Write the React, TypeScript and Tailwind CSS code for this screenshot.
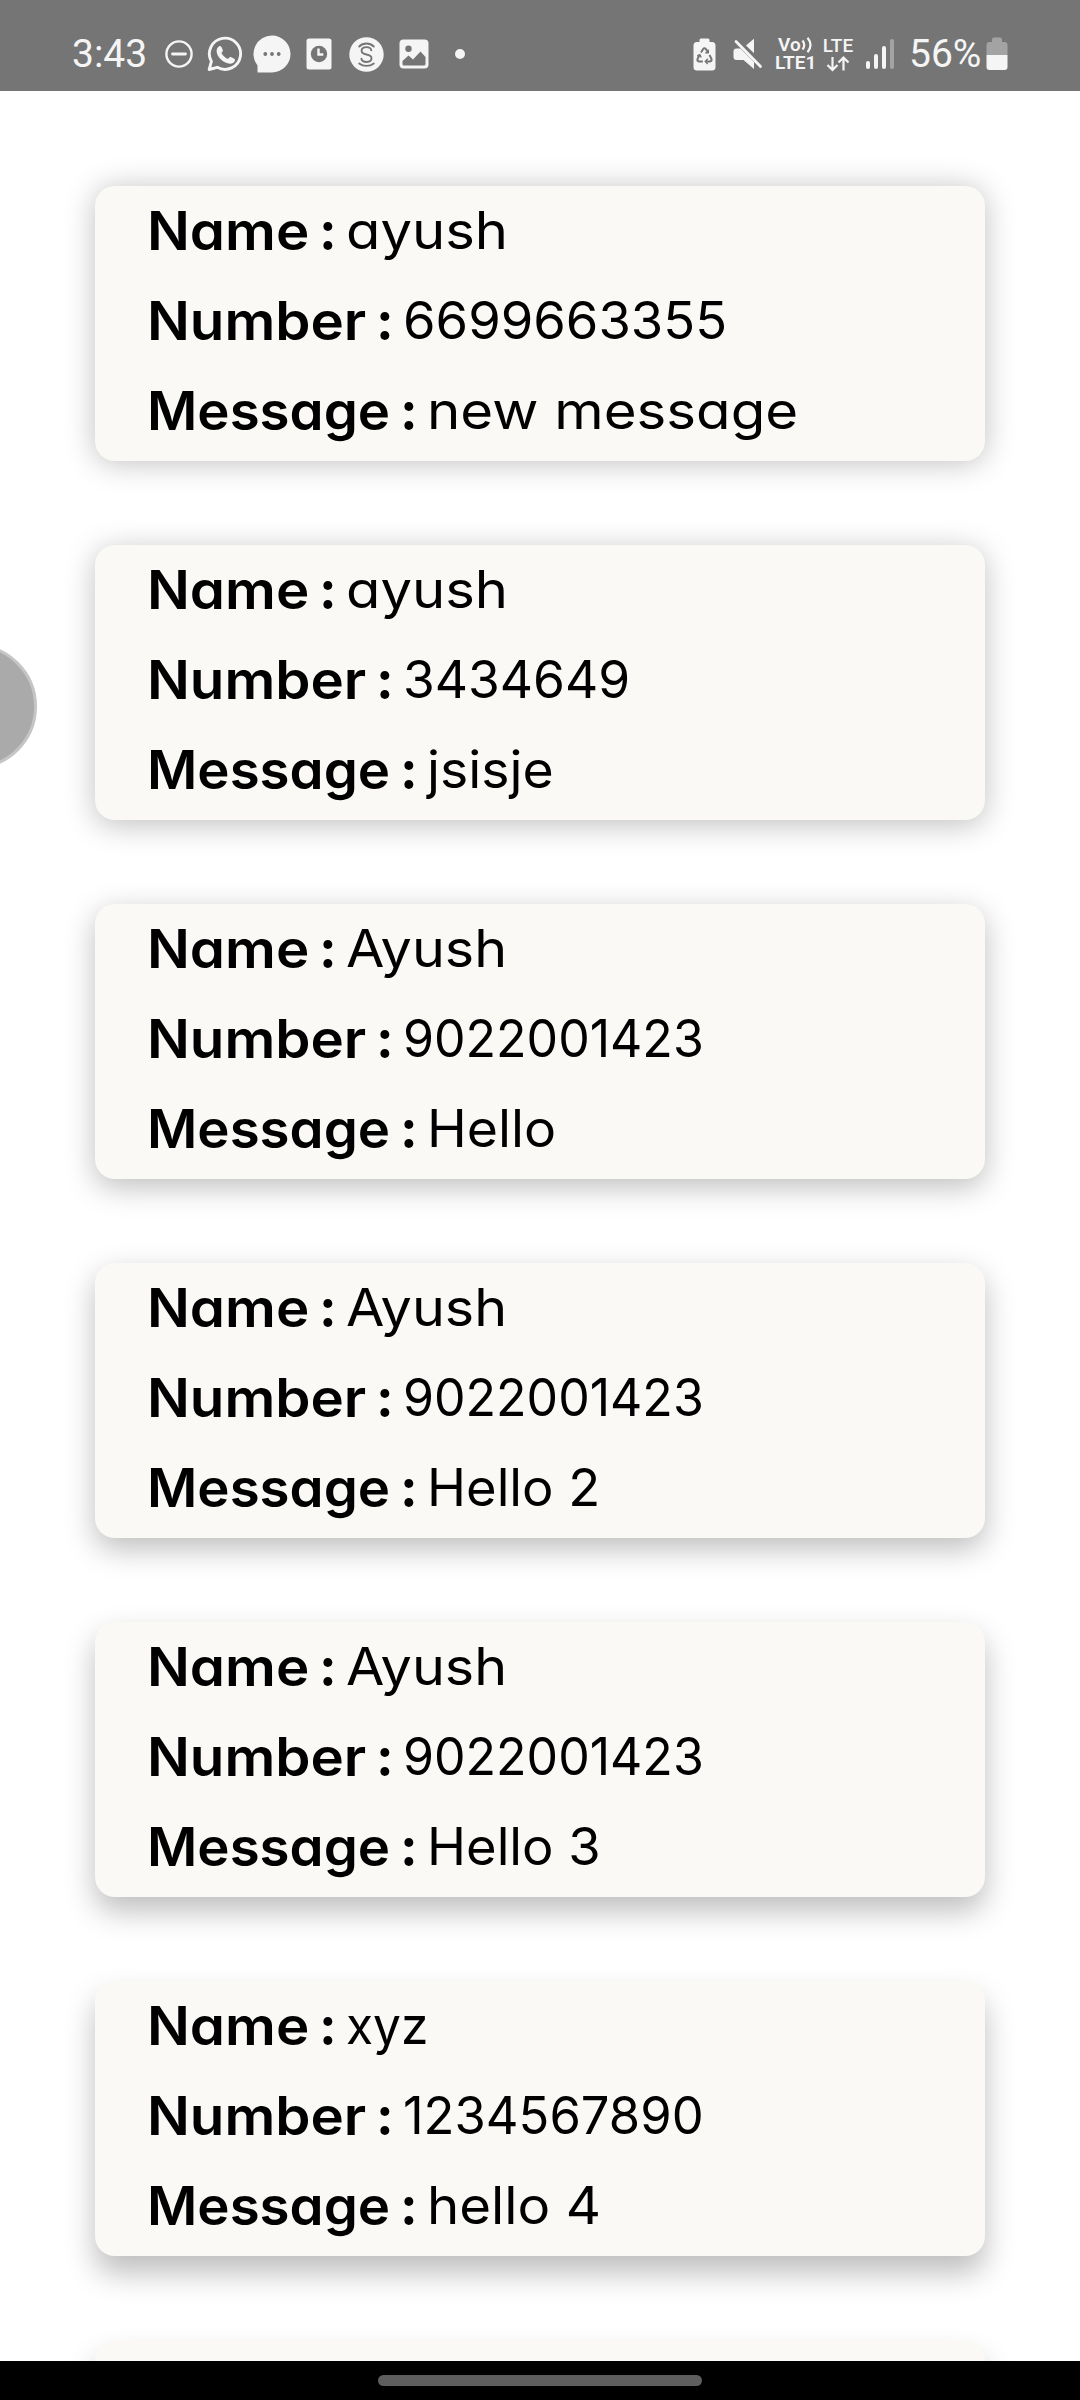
type Line = { text: string; stretch: string };
type Entry = { name: Line; number: Line; message: Line; shadow: string };

const ENTRIES: Entry[] = [
  {
    name: { text: "ayush", stretch: "scale-x-[1.08]" },
    number: { text: "6699663355", stretch: "scale-x-[1.01]" },
    message: { text: "new message", stretch: "scale-x-[1.085]" },
    shadow: "shadow-[0_2px_30px_rgba(0,0,0,0.25)]",
  },
  {
    name: { text: "ayush", stretch: "scale-x-[1.08]" },
    number: { text: "3434649", stretch: "scale-x-[0.99]" },
    message: { text: "jsisje", stretch: "scale-x-[1.03]" },
    shadow: "shadow-[0_5px_30px_rgba(0,0,0,0.25)]",
  },
  {
    name: { text: "Ayush", stretch: "scale-x-[1.07]" },
    number: { text: "9022001423", stretch: "scale-x-[0.962]" },
    message: { text: "Hello", stretch: "scale-x-[1.03]" },
    shadow: "shadow-[0_8px_30px_rgba(0,0,0,0.26)]",
  },
  {
    name: { text: "Ayush", stretch: "scale-x-[1.07]" },
    number: { text: "9022001423", stretch: "scale-x-[0.962]" },
    message: { text: "Hello 2", stretch: "scale-x-[1.01]" },
    shadow: "shadow-[0_11px_30px_rgba(0,0,0,0.26)]",
  },
  {
    name: { text: "Ayush", stretch: "scale-x-[1.07]" },
    number: { text: "9022001423", stretch: "scale-x-[0.962]" },
    message: { text: "Hello 3", stretch: "scale-x-[1.01]" },
    shadow: "shadow-[0_14px_30px_rgba(0,0,0,0.26)]",
  },
  {
    name: { text: "xyz", stretch: "scale-x-[0.955]" },
    number: { text: "1234567890", stretch: "scale-x-[0.975]" },
    message: { text: "hello 4", stretch: "scale-x-[1.05]" },
    shadow: "shadow-[0_17px_30px_rgba(0,0,0,0.26)]",
  },
];

function Row({ label, width, stretch, value }: { label: string; width: string; stretch: string; value: Line }) {
  return (
    <div className="flex h-[90px] leading-[90px] whitespace-nowrap">
      <span className={`${width} shrink-0 text-[53px] font-semibold`}>
        <span className={`inline-block origin-left ${stretch}`}>{label}</span>
      </span>
      <span className="w-[27px] shrink-0 text-[53px] font-bold">:</span>
      <span className={`inline-block origin-left ${value.stretch}`}>{value.text}</span>
    </div>
  );
}

function Card({ entry }: { entry: Entry }) {
  return (
    <section className={`h-[275px] shrink-0 rounded-[20px] bg-[#faf9f6] pl-[52px] ${entry.shadow}`}>
      <Row label="Name" width="w-[172px]" stretch="scale-x-[1.065]" value={entry.name} />
      <Row label="Number" width="w-[229px]" stretch="scale-x-[1.065]" value={entry.number} />
      <Row label="Message" width="w-[253px]" stretch="scale-x-[1.03]" value={entry.message} />
    </section>
  );
}

function NotificationIcons() {
  return (
    <>
      <svg className="ml-[17px] size-[28px]" viewBox="0 0 28 28" fill="none" stroke="currentColor">
        <circle cx="14" cy="14" r="12.6" strokeWidth="2.4" />
        <path d="M7.5 14h13" strokeWidth="2.8" strokeLinecap="round" />
      </svg>
      <svg className="ml-[14px] size-[36px]" viewBox="0 0 36 36">
        <path
          d="M2.2 33.5 4.4 25.4A15.6 15.6 0 1 1 10.3 31.3Z"
          fill="none"
          stroke="currentColor"
          strokeWidth="2.9"
          strokeLinejoin="round"
        />
        <path
          d="M12.1 10.2c.8-.4 1.8-.2 2.2.6l1.5 3.3c.4.8-.1 1.5-1.4 3 1.5 2.9 3.7 4.7 6.6 5.9 1.5-1.9 2.1-2.3 3-1.9l3.2 1.6c.8.4.9 1 .6 2-.6 1.8-2.6 3-4.6 3-7.3-.6-13.3-7-13.6-12.5 0-2 .9-4.1 2.5-5z"
          fill="currentColor"
        />
      </svg>
      <svg className="ml-[10px] h-[38px] w-[38px]" viewBox="0 0 38 38">
        <path d="M19 .5a18.5 18.5 0 1 1 0 37H4.5v-7A18.5 18.5 0 0 1 19 .5Z" fill="currentColor" />
        <g fill="#757575">
          <circle cx="12.3" cy="19" r="1.9" />
          <circle cx="19" cy="19" r="1.9" />
          <circle cx="25.7" cy="19" r="1.9" />
        </g>
      </svg>
      <svg className="ml-[15px] h-[32px] w-[26px]" viewBox="0 0 26 32">
        <rect x=".5" y=".5" width="25" height="31" rx="2.5" fill="currentColor" />
        <circle cx="13" cy="16" r="8.2" fill="#757575" />
        <path d="M12.5 10.5v6h4.8" fill="none" stroke="currentColor" strokeWidth="2.4" />
      </svg>
      <svg className="ml-[17px] size-[35px]" viewBox="0 0 35 35">
        <circle cx="17.5" cy="17.5" r="17.2" fill="currentColor" />
        <g fill="none" stroke="#757575" strokeWidth="1.9" strokeLinecap="round">
          <path d="M22.3 13.3c-.4-2-2.2-3.2-4.8-3.2-3 0-4.9 1.500-4.900 3.700 0 2.300 1.800 3.200 4.900 3.700s5 1.500 5 3.800-2 3.700-5 3.700-4.900-1.300-5.100-3.300" />
          <path d="M10.2 9.500c4-4 10.600-4 14.600 0M10.200 26.500c4 3.200 10.600 3.200 14.600 0" />
        </g>
      </svg>
      <svg className="ml-[15px] size-[30px]" viewBox="0 0 30 30">
        <rect x=".5" y=".5" width="29" height="29" rx="4" fill="currentColor" />
        <circle cx="9.5" cy="9.8" r="3.2" fill="#757575" />
        <path d="M3.5 22 9.5 16.500 14 20.500 21.500 12.500 26.500 18v7a1.500 1.500 0 0 1-1.500 1.500H5A1.500 1.500 0 0 1 3.500 25Z" fill="#757575" />
      </svg>
      <span className="ml-[26px] size-[10px] rounded-full bg-current" />
    </>
  );
}

function SystemIcons() {
  return (
    <>
      <svg className="h-[33px] w-[23px]" viewBox="0 0 23 33">
        <path d="M8 .5h7A1.5 1.5 0 0 1 16.5 2v2H19a3.5 3.5 0 0 1 3.5 3.5V29a3.5 3.5 0 0 1-3.5 3.5H4A3.5 3.5 0 0 1 .5 29V7.5A3.5 3.5 0 0 1 4 4h2.5V2A1.5 1.5 0 0 1 8 .5Z" fill="currentColor" />
        <g fill="none" stroke="#757575" strokeWidth="2">
          <path d="M8 14.5 10.3 10.8q1.2-1.3 2.4 0L14.8 14.3" />
          <path d="M16.5 17l2 4q.5 2-1.500 2.500H13M9.800 23.500H6q-2-.5-1.500-2.500L6.500 17" />
          <path d="M12.3 14.8h3v-3.300M14.800 20.800l-2.500 2.700 2.500 2.500M4.200 18l2.700-1.300 1.300 2.800" strokeWidth="1.4" />
        </g>
      </svg>
      <svg className="ml-[17px] h-[32px] w-[30px]" viewBox="0 0 30 32">
        <g fill="currentColor">
          <path d="M13 7.5 21 .8V15.2Z" />
          <path d="M.5 13.5A3 3 0 0 1 3.5 10.5H7.5L21 24V31L10.5 22H3.5A3 3 0 0 1 .5 19Z" />
        </g>
        <path d="M3 3.5 27.5 28.5" stroke="currentColor" strokeWidth="2.8" strokeLinecap="round" />
      </svg>
      <div className="ml-[12px] flex w-[41px] flex-col text-[19px] leading-[18px] font-semibold">
        <span className="flex items-center pl-[3px]">
          Vo
          <svg className="h-[16px] w-[12px]" viewBox="0 0 12 16" fill="none" stroke="currentColor" strokeWidth="2.2">
            <path d="M1.5 3.5q3.5 4.5 0 9M6.5 .8q6 7.2 0 14.4" />
          </svg>
        </span>
        <span>LTE1</span>
      </div>
      <div className="ml-[6px] flex w-[32px] flex-col items-center text-[19px] leading-[18px] font-medium">
        <span>LTE</span>
        <svg className="h-[17px] w-[24px]" viewBox="0 0 24 17" fill="none" stroke="currentColor" strokeWidth="2.2">
          <path d="M6.5 2v13M1.5 10l5 5 5-5M17.5 15.5V2.5M12.5 7.5l5-5 5 5" />
        </svg>
      </div>
      <div className="ml-[12px] flex h-[30px] items-end gap-[4px]">
        <span className="h-[8px] w-[4px] rounded-full bg-current" />
        <span className="h-[15px] w-[4px] rounded-full bg-current" />
        <span className="h-[23px] w-[4px] rounded-full bg-current" />
        <span className="h-[30px] w-[4px] rounded-full bg-[#a3a3a3]" />
      </div>
      <span className="ml-[15px] w-[72px] text-[39px] whitespace-nowrap">
        <span className="inline-block origin-left">56%</span>
      </span>
      <svg className="ml-[5px] h-[34px] w-[22px]" viewBox="0 0 22 34">
        <path d="M8 .5h6A2 2 0 0 1 16 2.5V5h2.5A3 3 0 0 1 21.5 8V18H.5V8A3 3 0 0 1 3.5 5H6V2.5A2 2 0 0 1 8 .5Z" fill="#a3a3a3" />
        <path d="M.5 18h21V30a3 3 0 0 1-3 3H3.5a3 3 0 0 1-3-3Z" fill="currentColor" />
      </svg>
    </>
  );
}

function StatusBar() {
  return (
    <header className="flex h-[91px] shrink-0 justify-between bg-[#757575] pt-[17px] pr-[72px] pl-[72px] font-[Roboto] text-[#f5f5f5]">
      <div className="flex h-[74px] items-center leading-none">
        <span className="w-[76px] text-[39px] whitespace-nowrap">3:43</span>
        <NotificationIcons />
      </div>
      <div className="flex h-[74px] items-center leading-none">
        <SystemIcons />
      </div>
    </header>
  );
}

export default function App() {
  return (
    <div className="relative flex h-[2400px] w-[1080px] flex-col overflow-hidden bg-white">
      <StatusBar />
      <main className="flex min-h-0 flex-1 flex-col gap-[84px] overflow-hidden px-[95px] pt-[95px] font-[Inter] text-[52px] text-black [font-feature-settings:'cv11']">
        {ENTRIES.map((entry, i) => (
          <Card key={i} entry={entry} />
        ))}
        <section className="h-[275px] shrink-0 rounded-[20px] bg-[#faf9f6] shadow-[0_19px_30px_rgba(0,0,0,0.26)]" />
      </main>
      <footer className="flex h-[39px] shrink-0 justify-center bg-black pt-[14px]">
        <div className="h-[11px] w-[324px] rounded-full bg-[#5e5e5e]" />
      </footer>
      <div className="absolute top-[644px] -left-[88px] size-[125px] rounded-full border-[3px] border-[#c5c5c5] bg-[#aaaaaa]" />
    </div>
  );
}
